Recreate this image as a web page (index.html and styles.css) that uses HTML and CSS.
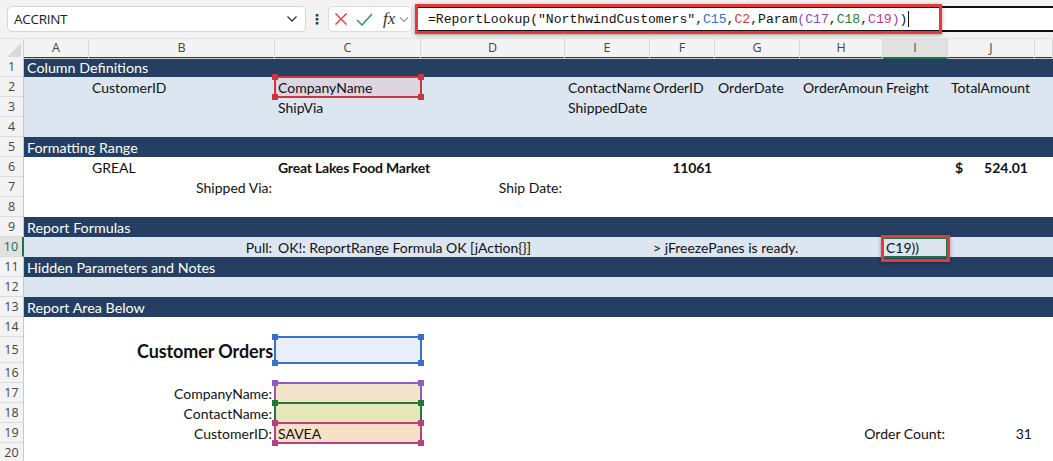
FILE: index.html
```html
<!DOCTYPE html>
<html>
<head>
<meta charset="utf-8">
<link rel="stylesheet" href="styles.css">
</head>
<body>
<div class="app">
  <div class="topbar">
    <div class="namebox">
      <span class="nb-text">ACCRINT</span>
      <svg class="chev" width="12" height="8" viewBox="0 0 12 8"><path d="M1.5 1.5 L6 6 L10.5 1.5" fill="none" stroke="#333" stroke-width="1.3"/></svg>
    </div>
    <div class="dots">⋮</div>
    <div class="fxbox">
      <svg width="14" height="14" viewBox="0 0 14 14"><path d="M1.5 1.5 L12.5 12.5 M12.5 1.5 L1.5 12.5" stroke="#e0363a" stroke-width="1.4" fill="none"/></svg>
      <svg width="17" height="13" viewBox="0 0 17 13"><path d="M1 7 L6 12 L16 1" stroke="#2e9e4e" stroke-width="1.5" fill="none"/></svg>
      <span class="fx">fx</span>
      <svg class="chev-s" width="10" height="7" viewBox="0 0 10 7"><path d="M1 1.5 L5 5.5 L9 1.5" fill="none" stroke="#999" stroke-width="1.2"/></svg>
    </div>
    <div class="formula">
      <span class="ftext">=ReportLookup("NorthwindCustomers",<span class="r-blue">C15</span>,<span class="r-red">C2</span>,Param<span class="r-pp">(</span><span class="r-purple">C17</span>,<span class="r-green">C18</span>,<span class="r-mag">C19</span><span class="r-pp">)</span>)</span><span class="caret"></span>
      <div class="hl-formula"></div>
    </div>
  </div>

  <div class="sheet">
    <div class="row colhdr">
      <div class="corner"><svg width="14" height="14" viewBox="0 0 14 14"><path d="M14 0 L14 14 L0 14 Z" fill="#d9d9d9"/></svg></div>
      <div class="ch">A</div><div class="ch">B</div><div class="ch">C</div><div class="ch">D</div><div class="ch">E</div><div class="ch">F</div><div class="ch">G</div><div class="ch">H</div><div class="ch on">I</div><div class="ch">J</div><div class="ch"></div>
    </div>

    <div class="row band"><div class="rh">1</div><div class="c title">Column Definitions</div></div>
    <div class="row light">
      <div class="rh">2</div><div class="c"></div>
      <div class="c">CustomerID</div>
      <div class="c box red"><i class="h tl"></i><i class="h tr"></i><i class="h bl"></i><i class="h br"></i><span class="t">CompanyName</span></div>
      <div class="c"></div>
      <div class="c clip">ContactName</div>
      <div class="c">OrderID</div>
      <div class="c">OrderDate</div>
      <div class="c clip">OrderAmount</div>
      <div class="c">Freight</div>
      <div class="c">TotalAmount</div>
    </div>
    <div class="row light">
      <div class="rh">3</div><div class="c"></div><div class="c"></div>
      <div class="c">ShipVia</div><div class="c"></div>
      <div class="c">ShippedDate</div>
    </div>
    <div class="row light"><div class="rh">4</div></div>
    <div class="row band"><div class="rh">5</div><div class="c title">Formatting Range</div></div>
    <div class="row">
      <div class="rh">6</div><div class="c"></div>
      <div class="c">GREAL</div>
      <div class="c b">Great Lakes Food Market</div>
      <div class="c"></div><div class="c"></div>
      <div class="c b right">11061</div>
      <div class="c"></div><div class="c"></div><div class="c"></div>
      <div class="c b acct"><span>$</span><span>524.01</span></div>
    </div>
    <div class="row">
      <div class="rh">7</div><div class="c"></div>
      <div class="c right">Shipped Via:</div>
      <div class="c"></div>
      <div class="c right">Ship Date:</div>
    </div>
    <div class="row"><div class="rh">8</div></div>
    <div class="row band"><div class="rh">9</div><div class="c title">Report Formulas</div></div>
    <div class="row light">
      <div class="rh act">10</div><div class="c"></div>
      <div class="c right">Pull:</div>
      <div class="c">OK!: ReportRange Formula OK [jAction{}]</div>
      <div class="c"></div><div class="c"></div>
      <div class="c">&gt; jFreezePanes is ready.</div>
      <div class="c"></div><div class="c"></div>
      <div class="c active">C19))<div class="hl-cell"></div></div>
    </div>
    <div class="row band"><div class="rh">11</div><div class="c title">Hidden Parameters and Notes</div></div>
    <div class="row light"><div class="rh">12</div></div>
    <div class="row band"><div class="rh">13</div><div class="c title">Report Area Below</div></div>
    <div class="row"><div class="rh">14</div></div>
    <div class="row tall">
      <div class="rh">15</div><div class="c"></div>
      <div class="c right big">Customer Orders</div>
      <div class="c box blue"><i class="h tl"></i><i class="h tr"></i><i class="h bl"></i><i class="h br"></i></div>
    </div>
    <div class="row"><div class="rh">16</div></div>
    <div class="row">
      <div class="rh">17</div><div class="c"></div>
      <div class="c right">CompanyName:</div>
      <div class="c box purple"><i class="h tl"></i><i class="h tr"></i><i class="h bl"></i><i class="h br"></i></div>
    </div>
    <div class="row">
      <div class="rh">18</div><div class="c"></div>
      <div class="c right">ContactName:</div>
      <div class="c box green"><i class="h tl"></i><i class="h tr"></i><i class="h bl"></i><i class="h br"></i></div>
    </div>
    <div class="row">
      <div class="rh">19</div><div class="c"></div>
      <div class="c right">CustomerID:</div>
      <div class="c box mag"><i class="h tl"></i><i class="h tr"></i><i class="h bl"></i><i class="h br"></i><span class="t">SAVEA</span></div>
      <div class="c"></div><div class="c"></div><div class="c"></div><div class="c"></div><div class="c"></div>
      <div class="c right">Order Count:</div>
      <div class="c right">31</div>
    </div>
    <div class="row"><div class="rh">20</div></div>
  </div>
</div>
</body>
</html>
```

FILE: styles.css
```css
* { box-sizing: border-box; }
html, body { margin: 0; padding: 0; }
body { width: 1053px; height: 461px; overflow: hidden; background: #fff; }
.app { width: 1053px; }

/* ---------- top bar ---------- */
.topbar {
  height: 38px;
  background: #f3f3f3;
  display: flex;
  align-items: center;
  padding: 0 0 0 7px;
}
.namebox {
  width: 299px;
  height: 26px;
  background: #fff;
  border: 1px solid #d6d6d6;
  border-radius: 5px;
  display: flex;
  align-items: center;
  justify-content: space-between;
  padding: 0 7px 0 6px;
}
.nb-text { font-family: "Open Sans", sans-serif; font-size: 13.5px; color: #222; letter-spacing: -0.3px; }
.dots { width: 22px; text-align: center; font-family: "DejaVu Sans", sans-serif; font-size: 14px; color: #333; font-weight: bold; }
.fxbox {
  width: 84px;
  height: 26px;
  background: #fff;
  border: 1px solid #dcdcdc;
  border-radius: 5px;
  display: flex;
  align-items: center;
  gap: 8px;
  padding: 0 0 0 5px;
}
.fx { font-family: "Liberation Serif", serif; font-style: italic; font-size: 17px; color: #333; margin-left: 2px; }
.chev-s { margin-left: -4px; }
.formula {
  position: relative;
  margin-left: 4px;
  flex: 1;
  height: 26px;
  background: #fff;
  border-top: 2px solid #111;
  border-bottom: 2px solid #111;
  display: flex;
  align-items: center;
  padding-left: 12px;
}
.ftext { font-family: "Liberation Mono", monospace; font-size: 13.1px; color: #111; white-space: pre; }
.r-blue { color: #2f6fd6; }
.r-red { color: #d23a3a; }
.r-purple { color: #8a46c8; }
.r-green { color: #1c8038; }
.r-mag { color: #c2378c; }
.r-pp { color: #a040b0; }
.caret { display: inline-block; width: 1px; height: 16px; background: #111; margin-left: 1px; }
.hl-formula {
  position: absolute;
  left: -1px;
  top: -4px;
  width: 527px;
  height: 30px;
  border: 3px solid #e5383b;
  box-shadow: 0 1px 4px rgba(0,0,0,0.35);
}

/* ---------- sheet ---------- */
.sheet {
  --cols: 24px 65px 186px 146px 144px 85px 65px 85px 83px 65px 87px 1fr;
  font-family: "Lato", "Liberation Sans", sans-serif;
  font-size: 14px;
  color: #111;
}
.row {
  display: grid;
  grid-template-columns: var(--cols);
  height: 20px;
  align-items: stretch;
}
.row.tall { height: 26px; }
.colhdr {
  height: 19px;
  background: #f3f3f3;
  border-top: 1px solid #e3e3e3;
  font-family: "Open Sans", sans-serif;
  font-size: 12.5px;
  color: #444;
}
.corner { display: flex; align-items: flex-end; justify-content: flex-end; padding: 0 2px 2px 0; border-right: 1px solid #d0d0d0; }
.ch { text-align: center; line-height: 18px; border-right: 1px solid #d8d8d8; border-bottom: 1px solid #c8c8c8; }
.ch.on { background: #e1e1e1; color: #1d6b3e; border-bottom: 2px solid #217346; }

.rh {
  background: #f3f3f3;
  font-family: "Open Sans", sans-serif;
  font-size: 12.5px;
  color: #444;
  border-bottom: 1px solid #dadada;
  border-right: 1px solid #c8c8c8;
  display: flex;
  align-items: center;
  justify-content: center;
}
.rh.act { background: #e1e1e1; color: #1d6b3e; border-right: 2px solid #217346; }

.band { background: #243f61; }
.light { background: #dce6f1; }

.c {
  position: relative;
  white-space: nowrap;
  padding: 0 3px 0 3px;
  line-height: 19px;
  display: flex;
  align-items: flex-end;
  min-width: 0;
}
.c.title { grid-column: 2 / -1; color: #fff; font-size: 14.3px; }
.c.clip { overflow: hidden; }
.c.right { justify-content: flex-end; }
.c.b { font-weight: bold; letter-spacing: -0.2px; }
.c.acct { justify-content: space-between; padding: 0 7px 0 7px; letter-spacing: 0; }
.c.big { font-weight: bold; font-size: 18px; line-height: 24px; padding-right: 2px; letter-spacing: -0.1px; }

/* selection / reference boxes */
.box::after {
  content: "";
  position: absolute;
  inset: -1px -1px -1px -1px;
  border: 2px solid var(--bc);
  pointer-events: none;
}
.box .t { position: relative; z-index: 1; }
.box .h {
  position: absolute;
  width: 6px;
  height: 6px;
  background: var(--bc);
  z-index: 3;
}
.box .tl { left: -3px; top: -3px; }
.box .tr { right: -3px; top: -3px; }
.box .bl { left: -3px; bottom: -3px; }
.box .br { right: -3px; bottom: -3px; }
.box.red { --bc: #c8373f; background: #ddd6e0; }
.box.blue { --bc: #3a70cc; background: #e9eff8; }
.box.purple { --bc: #8d5cc4; background: #f3e3c9; z-index: 1; }
.box.green { --bc: #1e7a33; background: #e6e6b9; z-index: 2; }
.box.mag { --bc: #b8407e; background: #f8dfc5; z-index: 3; }

.active::after {
  content: "";
  position: absolute;
  inset: 0 0 -1px -1px;
  border: 2px solid #217346;
}
.hl-cell {
  position: absolute;
  left: -2px;
  top: -2px;
  width: 69px;
  height: 27px;
  border: 3px solid #e5383b;
  box-shadow: 0 1px 4px rgba(0,0,0,0.35);
  z-index: 2;
}
```
